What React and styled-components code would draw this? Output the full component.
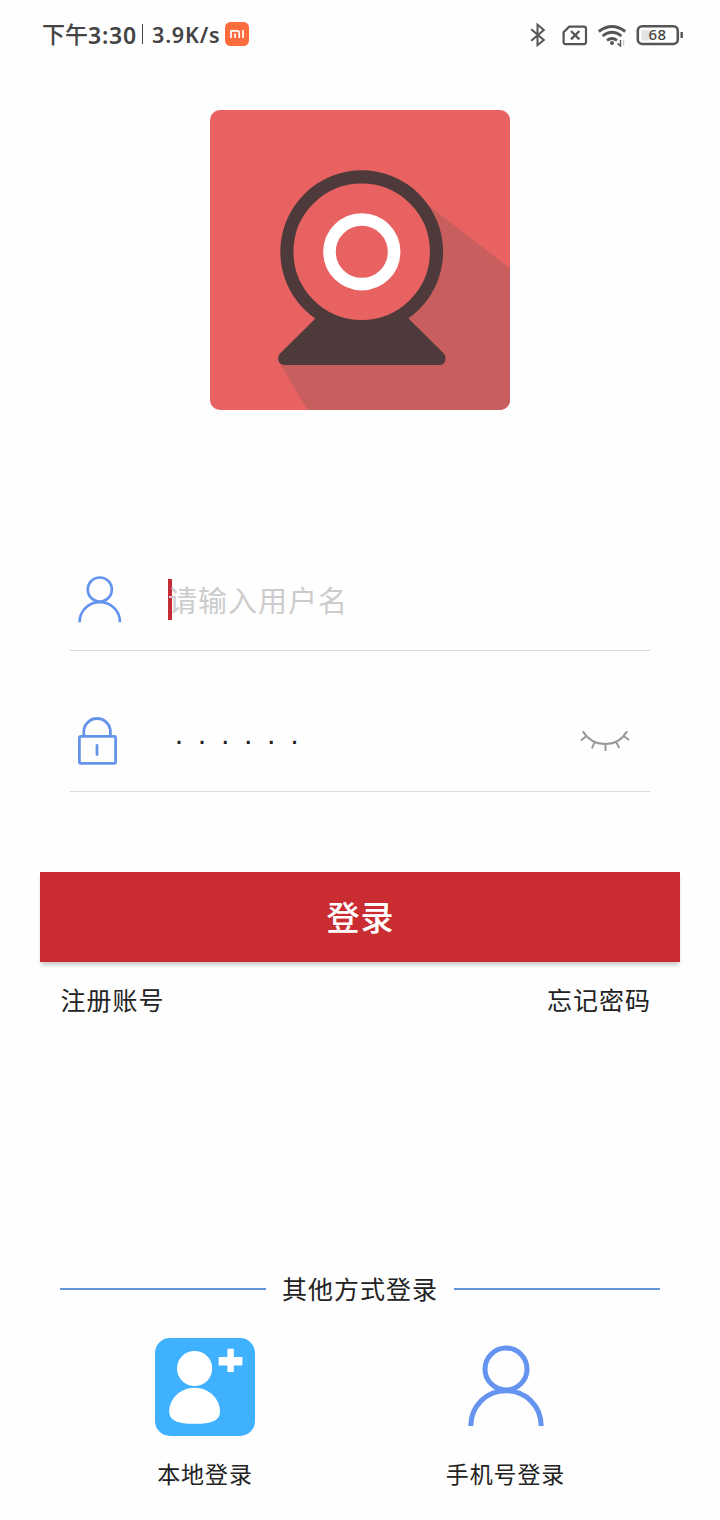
import React from 'react'
import styled, { createGlobalStyle } from 'styled-components'

const GlobalStyle = createGlobalStyle`
    * {
        box-sizing: border-box;
    }

    body {
        margin: 0;
        background: #fefefe;
        font-family: "Noto Sans CJK SC", sans-serif;
        color: #222;
    }
`

const Page = styled.div`
    display: flex;
    flex-direction: column;
    width: 720px;
    height: 1520px;
    overflow: hidden;
`

const StatusBar = styled.header`
    display: flex;
    align-items: center;
    justify-content: space-between;
    height: 70px;
    padding: 0 37px 0 42px;
    color: #444;
`

const StatusGroup = styled.div`
    display: flex;
    align-items: center;
    height: 30px;
    margin-top: -2px;
`

const StatusText = styled.span`
    padding: ${({$cjk}) => $cjk ? '0 0 2px' : '2px 0 0'};
    font-family: ${({$cjk}) => $cjk ? '"Noto Sans CJK SC"' : '"Noto Sans"'}, sans-serif;
    font-size: ${({$size}) => $size}px;
    font-weight: ${({$cjk}) => $cjk ? 500 : 600};
    letter-spacing: ${({$spacing}) => $spacing || 0}px;
    line-height: 30px;
    white-space: nowrap;
`

const Separator = styled.i`
    width: 1px;
    height: 20px;
    margin: 0 9px 0 5px;
    background: #444;
`

const MiBadge = styled.svg`
    width: 24px;
    height: 24px;
    margin-left: 5px;
`

const Logo = styled.svg`
    display: block;
    width: 300px;
    height: 300px;
    margin: 40px auto 0;
    border-radius: 10px;
`

const Form = styled.div`
    display: flex;
    flex-direction: column;
    padding: 140px 70px 0;
`

const Field = styled.div`
    display: flex;
    align-items: center;
    height: ${({$height}) => $height}px;
    padding: ${({$top}) => $top || 0}px 20px ${({$bottom}) => $bottom || 0}px 8px;
    border-bottom: 1px solid #dadada;
`

const FieldIcon = styled.div`
    display: flex;
    width: 90px;
`

const Placeholder = styled.span`
    position: relative;
    z-index: 0;
    height: 41px;
    font-size: 29px;
    line-height: 40px;
    letter-spacing: 1px;
    color: #ccc;
`

const Caret = styled.i`
    position: absolute;
    z-index: -1;
    left: 0;
    top: 0;
    width: 4px;
    height: 41px;
    background: #c52c33;
`

const Password = styled.span`
    flex: 1;
    padding: 0 0 2px 6px;
    font-family: "Liberation Sans", sans-serif;
    font-size: 30px;
    line-height: 40px;
    letter-spacing: 13.1px;
`

const LoginButton = styled.button`
    height: 90px;
    margin: 80px 40px 0;
    padding: 0 0 2px 1px;
    border: 0;
    background: #c92c31;
    box-shadow: 0 4px 4px -1px rgba(0, 0, 0, 0.2);
    color: #fff;
    font-family: inherit;
    font-size: 33px;
    font-weight: 500;
    letter-spacing: 1px;
    line-height: 88px;
`

const Links = styled.div`
    display: flex;
    justify-content: space-between;
    padding: 19px 69px 0 60.5px;
`

const TextLink = styled.a`
    font-size: 25px;
    line-height: 37px;
    letter-spacing: 1px;
`

const Divider = styled.div`
    display: flex;
    align-items: center;
    justify-content: space-between;
    height: 40px;
    margin: 251px 60px 0;

    &::before,
    &::after {
        content: "";
        width: 206px;
        height: 2px;
        background: #6493de;
    }
`

const DividerText = styled.span`
    padding-bottom: 2px;
    font-size: 25px;
    line-height: 38px;
    letter-spacing: 1px;
`

const Methods = styled.div`
    display: grid;
    grid-template-columns: 300px 301px;
    padding: 29px 0 0 55px;
`

const Method = styled.a`
    display: flex;
    flex-direction: column;
    align-items: center;
`

const MethodIcon = styled.div`
    display: flex;
    align-items: center;
    justify-content: center;
    height: 98px;
    padding: ${({$inset}) => $inset || 0};
`

const MethodLabel = styled.span`
    margin-top: 18px;
    font-size: 23px;
    line-height: 38px;
    letter-spacing: 0.9px;
`

const Person = ({width, height, stroke}) => (
    <svg width={width} height={height} viewBox="0 0 76 81" fill="none" stroke="#6494f0" strokeWidth={stroke}>
        <circle cx="38" cy="24" r="21"/>
        <path d="M2.8 81C2.8 61 18.5 45.8 38 45.8S73.2 61 73.2 81"/>
    </svg>
)

const Lock = () => (
    <svg width="39" height="48" viewBox="0 0 39 48" fill="none" stroke="#6494ea" strokeWidth="2.8">
        <path d="M5.8 18V14.8a13.3 13.3 0 0 1 26.6 0V18"/>
        <rect x="1.4" y="19.3" width="36.2" height="27" rx="1.5"/>
        <path d="M19 28.5v9" strokeLinecap="round"/>
    </svg>
)

const ClosedEye = () => (
    <svg width="50" height="22" viewBox="0 0 50 22" fill="none" stroke="#999" strokeWidth="2">
        <path d="M2.8 1.2C8 9.5 15.5 14 25.2 14S42.2 9.5 47 1.2"/>
        <path d="M6.4 6 1 10.5M14.6 12.4l-2.7 6M25.5 14v7M36.3 12.4l3 5.6M43.7 6l5.4 4"/>
    </svg>
)

const StatusIcons = () => (
    <svg width="155" height="30" viewBox="0 0 155 30" fill="none" stroke="#555" strokeWidth="2.2">
        <path d="M3.2 9.2 15.8 20 9.5 25.2V4.6L15.8 10 3.2 20.8" strokeWidth="2"/>
        <path d="M41.2 6.7h14.8q2 0 2 2v13.4q0 2-2 2H37.6q-2 0-2-2V12.3z"/>
        <path d="m43 11 8.4 8.4m0-8.4-8.4 8.4"/>
        <path d="M70.8 11.5Q84 1.5 97.2 11.5" strokeWidth="3"/>
        <path d="M74.6 16q9.4-7.4 18.800 0M79 20.4q5-3.8 10 0" strokeWidth="2.8"/>
        <circle cx="84" cy="23" r="2" fill="#555" stroke="none"/>
        <path d="M92.5 20v6l-3-2.6" strokeWidth="1.4"/>
        <path d="M95.5 25.5V20" stroke="#ccc" strokeWidth="1.5"/>
        <rect x="113.5" y="10" width="9" height="10.5" fill="#e4e4e4" stroke="none"/>
        <rect x="109.8" y="6.2" width="40" height="17.8" rx="4.5" strokeWidth="2.6"/>
        <path d="M153.7 12v6" strokeWidth="2.4"/>
        <text x="129.500" y="20.2" textAnchor="middle" fill="#444" stroke="none" fontFamily="Noto Sans, sans-serif" fontSize="15" fontWeight="500" letterSpacing="0.5">68</text>
    </svg>
)

const App = () => {
    return (
        <>
            <GlobalStyle/>
            <Page>
                <StatusBar>
                    <StatusGroup>
                        <StatusText $cjk $size={23}>下午</StatusText>
                        <StatusText $size={23} $spacing={0.8}>3:30</StatusText>
                        <Separator/>
                        <StatusText $size={21.5} $spacing={0.8}>3.9K/s</StatusText>
                        <MiBadge viewBox="0 0 24 24">
                            <rect width="24" height="24" rx="5.5" fill="#fd6c3c"/>
                            <path d="M6 16V8.9h6.2q2 0 2 2V16M10.1 11.5V16M18 8v8" fill="none" stroke="#fff" strokeWidth="1.7"/>
                        </MiBadge>
                    </StatusGroup>
                    <StatusIcons/>
                </StatusBar>

                <Logo viewBox="0 0 300 300">
                    <rect width="300" height="300" fill="#e96262"/>
                    <path d="M220 96.5 300 158.5V300H97.5L71 255 152 141z" fill="#c85e5e"/>
                    <path d="M106 208h92l35.8 35.5c4 5 1 11.5-4.5 11.5H74.5c-5.5 0-8.5-6.5-4.5-11.5z" fill="#4e3a3a"/>
                    <circle cx="151.7" cy="141.7" r="74.8" fill="#e96262" stroke="#4e3a3a" strokeWidth="13.2"/>
                    <circle cx="151.8" cy="141.8" r="32.3" fill="none" stroke="#fff" strokeWidth="12.6"/>
                </Logo>

                <Form>
                    <Field $height={101} $bottom={2}>
                        <FieldIcon>
                            <Person width={43.6} height={48} stroke={4.7}/>
                        </FieldIcon>
                        <Placeholder><Caret/>请输入用户名</Placeholder>
                    </Field>
                    <Field $height={141} $top={40}>
                        <FieldIcon>
                            <Lock/>
                        </FieldIcon>
                        <Password>······</Password>
                        <ClosedEye/>
                    </Field>
                </Form>

                <LoginButton>登录</LoginButton>
                <Links>
                    <TextLink>注册账号</TextLink>
                    <TextLink>忘记密码</TextLink>
                </Links>

                <Divider>
                    <DividerText>其他方式登录</DividerText>
                </Divider>
                <Methods>
                    <Method>
                        <MethodIcon>
                            <svg width="100" height="98" viewBox="0 0 100 98">
                                <rect width="100" height="98" rx="15" fill="#3fb1fe"/>
                                <g fill="#fff">
                                    <circle cx="39.6" cy="30.5" r="17.6"/>
                                    <path d="M39.6 49.8C54 49.8 65 61 65 73.5c0 9-8 12.3-25.4 12.3S14.2 82.5 14.2 73.5C14.2 61 25.2 49.8 39.6 49.8z"/>
                                    <path d="M72.4 10.7h6.4V19h8.6v8.6h-8.6V34h-6.4v-6.4h-8.8V19h8.8z"/>
                                </g>
                            </svg>
                        </MethodIcon>
                        <MethodLabel>本地登录</MethodLabel>
                    </Method>
                    <Method>
                        <MethodIcon $inset="0 0 4px 1px">
                            <Person width={76} height={81} stroke={5}/>
                        </MethodIcon>
                        <MethodLabel>手机号登录</MethodLabel>
                    </Method>
                </Methods>
            </Page>
        </>
    )
}

export default App
